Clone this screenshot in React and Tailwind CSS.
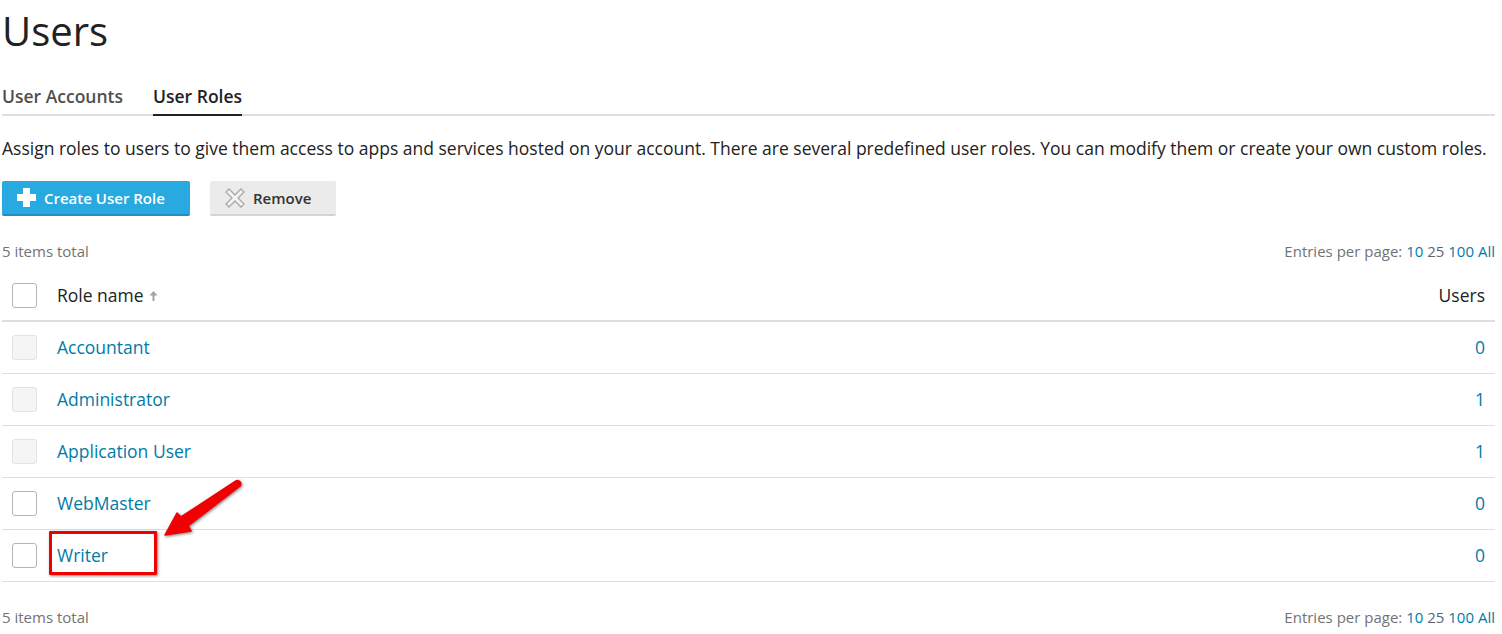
import React from "react";

const roles = [
  { name: "Accountant", users: 0, locked: true },
  { name: "Administrator", users: 1, locked: true },
  { name: "Application User", users: 1, locked: true },
  { name: "WebMaster", users: 0 },
  { name: "Writer", users: 0 },
];

const Checkbox = ({ locked }) => (
  <span
    className={`block w-[25px] h-[25px] rounded-[3px] border ${
      locked ? "bg-[#f5f5f5] border-[#e2e2e2]" : "bg-white border-[#b5b5b5]"
    }`}
  />
);

const Pager = () => (
  <div className="flex justify-between items-center h-[20px] text-[15px] text-[#737373]">
    <span>5 items total</span>
    <span>
      Entries per page: <span className="text-[#007ba8]">10</span>{" "}
      <span className="text-[#5c6670]">25</span>{" "}
      <span className="text-[#007ba8]">100</span>{" "}
      <span className="text-[#007ba8]">All</span>
    </span>
  </div>
);

const App = () => {
  return (
    <div
      className="relative h-[634px] overflow-hidden bg-white pl-[2px] pr-[7px] text-[#222] font-['Open_Sans',sans-serif]"
    >
      <h1 className="pt-[4px] h-[80px] text-[40px] leading-[54px]">Users</h1>

      {/* Tabs */}
      <div className="flex gap-[30px] h-[36px] border-b-2 border-[#dedede] text-[17.5px] font-semibold">
        <div className="h-[36px] leading-[33px] text-[#4f4f4f]">User Accounts</div>
        <div className="h-[36px] leading-[33px] border-b-2 border-[#222]">User Roles</div>
      </div>

      <p className="mt-[19px] h-[26px] text-[17.5px] leading-[26px] whitespace-nowrap">
        Assign roles to users to give them access to apps and services hosted on your account. There are several
        predefined user roles. You can modify them or create your own custom roles.
      </p>

      {/* Toolbar */}
      <div className="flex gap-[20px] mt-[20px] h-[35px] text-[15px] font-semibold">
        <button className="flex items-center w-[188px] pl-[15px] pt-[2px] gap-[8px] rounded-[2px] bg-[#28a9e0] border-b-2 border-[#1f8fc0] text-white">
          <svg width="19" height="19" viewBox="0 0 19 19" fill="#fff" className="-mt-[2px]">
            <path d="M6 0h7v6h6v7h-6v6H6v-6H0V6h6z" />
          </svg>
          Create User Role
        </button>
        <button className="flex items-center w-[126px] pl-[15px] pt-[2px] gap-[8px] rounded-[2px] bg-[#ebebeb] border-b-2 border-[#d4d4d4] text-[#333]">
          <svg width="20" height="20" viewBox="0 0 20 20" fill="#f4f4f4" stroke="#a8a8a8" strokeWidth="1.3" className="-mt-[2px]">
            <path d="M4 1L10 7l6-6 3 3-6 6 6 6-3 3-6-6-6 6-3-3 6-6-6-6z" />
          </svg>
          Remove
        </button>
      </div>

      <div className="mt-[25px]">
        <Pager />
      </div>

      {/* Table */}
      <div className="mt-[9px] text-[17.5px]">
        <div className="flex items-center h-[52px] border-b-2 border-[#dedede] pl-[10px] pr-[10px]">
          <Checkbox />
          <span className="ml-[20px]">Role name</span>
          <svg width="9" height="10" viewBox="0 0 9 10" fill="#a3a3a3" className="ml-[5px] mt-[2px]">
            <path d="M4.500 0L8.500 4.500H5.500V10H3.500V4.500H0.500z" />
          </svg>
          <span className="ml-auto">Users</span>
        </div>
        {roles.map((role) => (
          <div
            key={role.name}
            className="flex items-center h-[52px] border-b border-[#dedede] pl-[10px] pr-[10px] text-[#007ba8]"
          >
            <Checkbox locked={role.locked} />
            <span className="ml-[20px]">{role.name}</span>
            <span className="ml-auto">{role.users}</span>
          </div>
        ))}
      </div>

      <div className="mt-[25px]">
        <Pager />
      </div>

      {/* Annotation */}
      <div className="absolute left-[49px] top-[531px] w-[108px] h-[44px] rounded-[1px] border-[3px] border-[#f00000] shadow-[1px_1px_3px_rgba(0,0,0,0.5)]" />
      <svg className="absolute left-[160px] top-[474px]" width="86" height="66" viewBox="0 0 86 66">
        <path
          d="M5 61L17 39 21 43 76 7C79 5.500 82 9 80 12L28 52 31 57z"
          fill="#f00000"
          stroke="#f00000"
          strokeWidth="1.500"
          strokeLinejoin="round"
          style={{ filter: "drop-shadow(1px 1px 1.500px rgba(0,0,0,0.5))" }}
        />
      </svg>
    </div>
  );
};

export default App;
